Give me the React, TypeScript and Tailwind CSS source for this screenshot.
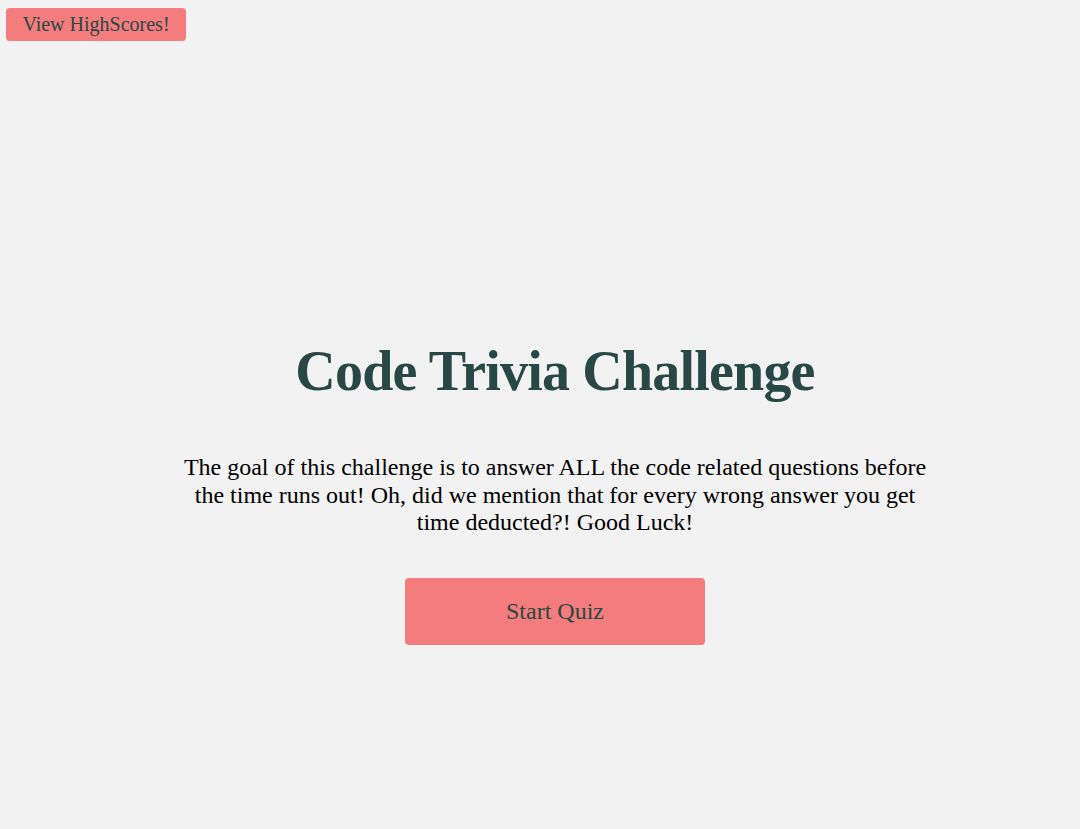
export default function App() {
	return (
		<div className="min-h-[829px] bg-[#f2f2f2] font-['Liberation_Serif',serif]">
			<header className="pt-2 pl-[6px]">
				<button
					type="button"
					className="w-[180px] h-[33px] rounded-[4px] bg-[#f47c7c] text-[20px] leading-[23px] text-[#284845]"
				>
					View HighScores!
				</button>
			</header>
			<main className="flex flex-col items-center pl-[30px] pt-[298px]">
				<h1 className="text-[56px] leading-[64px] font-bold tracking-[-0.8px] text-[#284845]">
					Code Trivia Challenge
				</h1>
				<p className="mt-[51px] w-[760px] text-center text-[24px] leading-[27.6px] text-black">
					The goal of this challenge is to answer ALL the code related questions before the time runs out! Oh, did we mention that for every wrong answer you get time deducted?! Good Luck!
				</p>
				<button
					type="button"
					className="mt-[41px] w-[300px] h-[67px] rounded-[4px] bg-[#f47c7c] text-[24px] text-[#284845]"
				>
					Start Quiz
				</button>
			</main>
		</div>
	);
}
